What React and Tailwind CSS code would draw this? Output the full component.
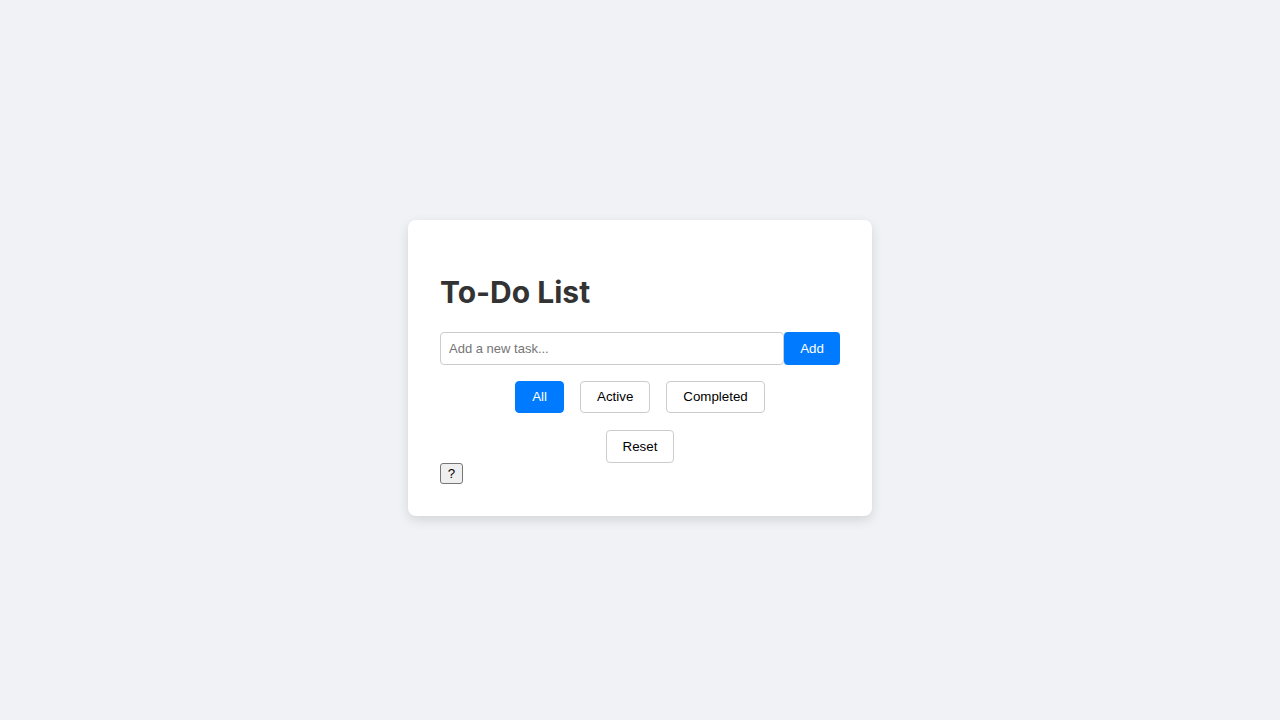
import { useState } from "react";

const filters = ["All", "Active", "Completed"];

export default function App() {
  const [task, setTask] = useState("");
  const [filter, setFilter] = useState("All");

  return (
    <div className="min-h-screen w-full bg-[#f0f2f5] flex items-center justify-center pt-4 font-['Liberation_Sans',Arial,sans-serif]">
      <div className="w-[464px] bg-white rounded-lg shadow-[0_4px_12px_rgba(0,0,0,0.12)] p-8">
        <h1 className="font-['Inter',sans-serif] font-bold text-[30px] leading-[38px] text-[#333] my-[21px]">
          To-Do List
        </h1>
        <div className="flex">
          <input
            type="text"
            placeholder="Add a new task..."
            value={task}
            onChange={(e) => setTask(e.target.value)}
            className="flex-1 h-[33px] px-2 text-[13px] border border-[#ccc] rounded-[4px] outline-none placeholder:text-[#757575]"
          />
          <button className="w-14 h-[33px] bg-[#007bff] text-white text-[13.33px] rounded-[4px]">
            Add
          </button>
        </div>
        <div className="flex justify-center gap-4 mt-4">
          {filters.map((f) => (
            <button
              key={f}
              onClick={() => setFilter(f)}
              className={
                f === filter
                  ? "h-8 px-4 text-[13.33px] rounded-[4px] border border-[#007bff] bg-[#007bff] text-white"
                  : "h-8 px-4 text-[13.33px] rounded-[4px] border border-[#ccc] bg-white text-black"
              }
            >
              {f}
            </button>
          ))}
        </div>
        <div className="flex justify-center mt-[17px]">
          <button className="h-[33px] px-4 text-[13.33px] rounded-[4px] border border-[#ccc] bg-white text-black">
            Reset
          </button>
        </div>
        <button className="block h-[21px] w-[23px] text-[13.33px] leading-none bg-[#efefef] border border-[#767676] rounded-[3px] text-black">
          ?
        </button>
      </div>
    </div>
  );
}
